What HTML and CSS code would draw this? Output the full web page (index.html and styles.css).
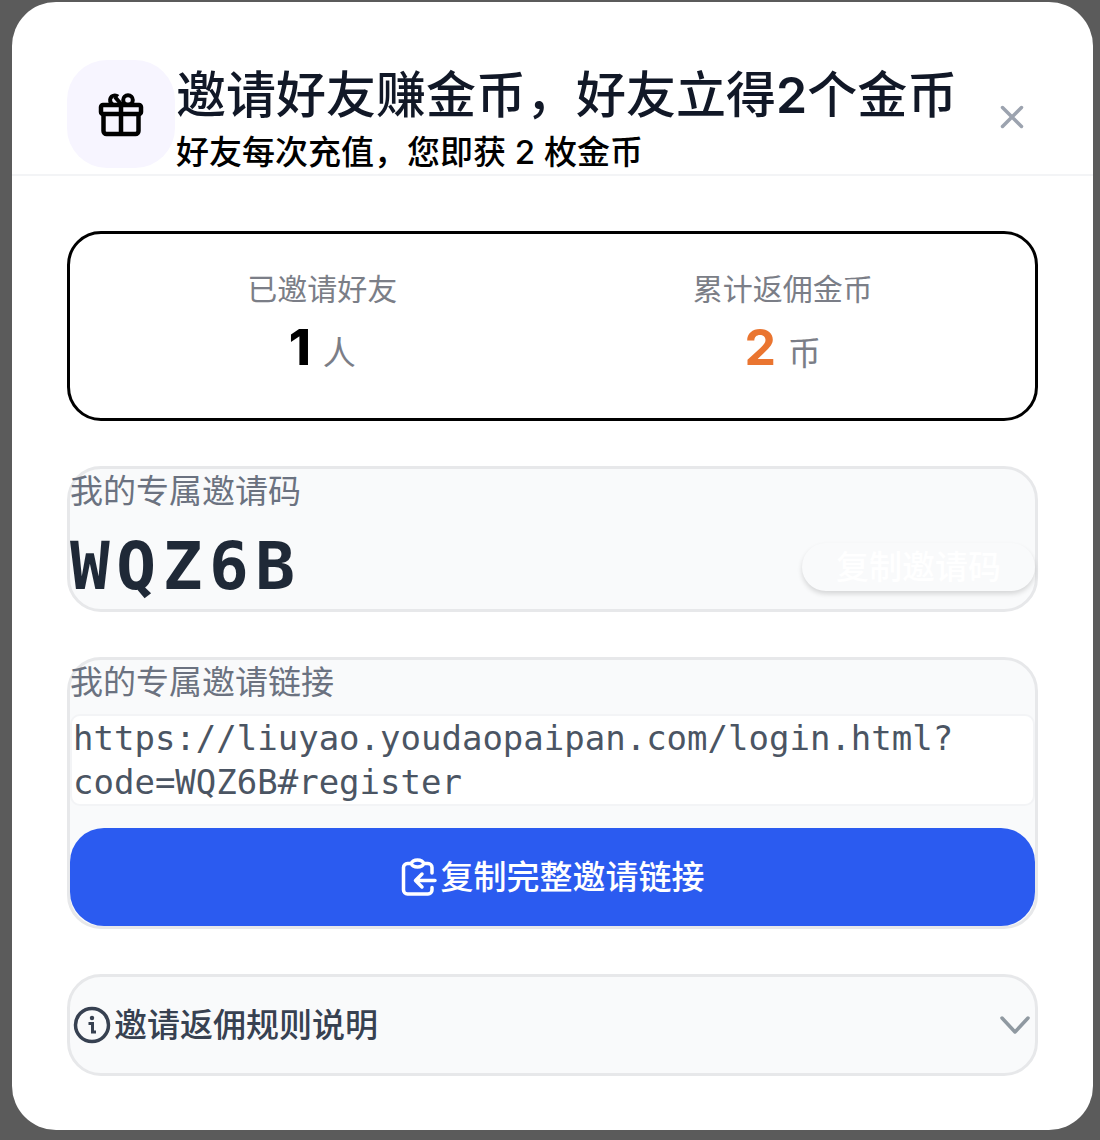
FILE: index.html
```html
<!DOCTYPE html>
<html lang="zh-CN">
<head>
    <meta charset="UTF-8">
    <meta name="viewport" content="width=device-width, initial-scale=1.0">
    <title>邀请好友</title>
    <link rel="stylesheet" href="styles.css">
</head>
<body>
    <main class="modal">
        <header class="modal-header">
            <div class="gift-badge">
                <svg width="46" height="46" viewBox="0 0 46 46" fill="none" stroke="currentColor" stroke-width="4.500" stroke-linejoin="round">
                    <rect x="3" y="14" width="40" height="9" rx="2"/>
                    <path d="M5.500 23V40a3 3 0 0 0 3 3h29a3 3 0 0 0 3-3V23M23 13v30"/>
                    <circle cx="30" cy="9" r="4.800" stroke-width="4"/>
                    <path d="M20 5.500a4.800 4.800 0 1 0-1 8M17 6l6 7" stroke-width="4"/>
                </svg>
            </div>
            <div class="heading">
                <h1 class="title">邀请好友赚金币，好友立得<b>2</b>个金币</h1>
                <p class="subtitle">好友每次充值，您即获 2 枚金币</p>
            </div>
            <button type="button" class="close" aria-label="关闭">
                <svg width="24" height="24" viewBox="0 0 24 24" fill="none" stroke="currentColor" stroke-width="3.500" stroke-linecap="round">
                    <path d="M2.500 2.500l19 19M21.500 2.500l-19 19"/>
                </svg>
            </button>
        </header>

        <div class="modal-body">
            <section class="stats">
                <div class="stat">
                    <p class="stat-label">已邀请好友</p>
                    <p class="stat-value"><strong>1</strong><span class="unit">人</span></p>
                </div>
                <div class="stat">
                    <p class="stat-label">累计返佣金币</p>
                    <p class="stat-value"><strong class="orange">2</strong><span class="unit">币</span></p>
                </div>
            </section>

            <section class="panel">
                <h2 class="panel-label">我的专属邀请码</h2>
                <div class="code-row">
                    <span class="code" id="inviteCode">WQZ6B</span>
                    <button type="button" class="copy-code">复制邀请码</button>
                </div>
            </section>

            <section class="panel">
                <h2 class="panel-label">我的专属邀请链接</h2>
                <p class="link-box">https://liuyao.youdaopaipan.com/login.html?<wbr>code=WQZ6B#register</p>
                <button type="button" class="copy-link">
                    <svg width="36" height="38" viewBox="0 0 36 38" fill="none" stroke="currentColor" stroke-width="3.500" stroke-linecap="round" stroke-linejoin="round">
                        <path d="M9 5.500H6.500a4 4 0 0 0-4 4V32a4 4 0 0 0 4 4H27a4 4 0 0 0 4-4v-2.500M24 5.500h3a4 4 0 0 1 4 4V15"/>
                        <ellipse cx="16.500" cy="5.500" rx="6" ry="3.500"/>
                        <path d="M34 22.500H15M21 16l-6.500 6.500L21 29"/>
                    </svg>
                    复制完整邀请链接
                </button>
            </section>

            <button type="button" class="panel rules" aria-expanded="false">
                <svg width="38" height="38" viewBox="0 0 38 38" fill="none" stroke="currentColor" stroke-width="3.500">
                    <circle cx="19" cy="19" r="16.500"/>
                    <circle cx="19" cy="12" r="2.200" fill="currentColor" stroke="none"/>
                    <path d="M15.500 17.500H19.500V26H23" stroke-width="3"/>
                </svg>
                <span>邀请返佣规则说明</span>
                <svg class="chevron" width="32" height="20" viewBox="0 0 32 20" fill="none" stroke="currentColor" stroke-width="3.500" stroke-linecap="round" stroke-linejoin="round">
                    <path d="M3 3l13 14L29 3"/>
                </svg>
            </button>
        </div>
    </main>
</body>
</html>
```

FILE: styles.css
```css
* {
    margin: 0;
    padding: 0;
    box-sizing: border-box;
}

body {
    background: #5b5b5b;
    padding: 2px 7px 10px 12px;
    font-family: Inter, "Noto Sans CJK SC", sans-serif;
    font-size: 33px;
    line-height: 44px;
    color: #000;
}

button {
    font: inherit;
    border: none;
    background: none;
    cursor: pointer;
}

svg {
    display: block;
    flex-shrink: 0;
}

.modal {
    background: #fff;
    border-radius: 44px;
    overflow: hidden;
}

.modal-header {
    display: flex;
    align-items: flex-start;
    gap: 1px;
    padding: 58px 55px 0;
    border-bottom: 2px solid #f3f4f6;
}

.gift-badge {
    display: flex;
    align-items: center;
    justify-content: center;
    width: 108px;
    height: 108px;
    border-radius: 40px;
    background: #f7f5ff;
}

.heading {
    flex: 1;
}

.title {
    font-size: 50px;
    font-weight: 500;
    line-height: 70px;
    color: #111827;
}

.title b {
    font-weight: 600;
}

.subtitle {
    font-weight: 500;
}

.close {
    display: flex;
    align-items: center;
    justify-content: center;
    align-self: center;
    width: 52px;
    height: 52px;
    color: #9ca3af;
}

.modal-body {
    display: flex;
    flex-direction: column;
    gap: 45px;
    padding: 55px 55px 54px;
}

.stats {
    display: grid;
    grid-template-columns: 1fr 1fr;
    padding: 34px 22px 27px;
    border: 3px solid #000;
    border-radius: 34px;
    text-align: center;
}

.stat-label {
    font-size: 30px;
    font-weight: 400;
    line-height: 42px;
    color: #7b7e87;
}

.stat-value {
    display: flex;
    justify-content: center;
    align-items: baseline;
    gap: 12px;
    line-height: 75px;
}

.stat-value strong {
    font-size: 50px;
    font-weight: 800;
}

.stat-value .orange {
    font-weight: 700;
    color: #ea7530;
}

.unit {
    font-weight: 400;
    color: #7b7e87;
}

.panel {
    border: 3px solid #e7e8ea;
    border-radius: 34px;
    background: #f9fafb;
}

.panel-label {
    font-size: 33px;
    font-weight: 400;
    color: #6b7280;
}

.code-row {
    display: flex;
    align-items: center;
    justify-content: space-between;
    padding-top: 12px;
}

.code {
    font-family: "DejaVu Sans Mono", monospace;
    font-size: 66px;
    font-weight: 700;
    line-height: 84px;
    letter-spacing: 0.1em;
    color: #1f2937;
}

.copy-code {
    padding: 2px 34px;
    border-radius: 24px;
    color: #fff;
    font-weight: 500;
    background: #f9fafb;
    box-shadow: 0 3px 5px rgba(0, 0, 0, 0.14);
}

.link-box {
    margin: 10px 0 22px;
    padding: 0 1px;
    border: 2px solid #f3f4f6;
    border-radius: 10px;
    background: #fff;
    font-family: "DejaVu Sans Mono", monospace;
    font-size: 34px;
    color: #4b5563;
    overflow-wrap: anywhere;
}

.copy-link {
    display: flex;
    align-items: center;
    justify-content: center;
    gap: 4px;
    width: 100%;
    padding: 27px;
    border-radius: 34px;
    background: #2b5bf0;
    color: #fff;
    font-weight: 500;
}

.rules {
    display: flex;
    align-items: center;
    gap: 3px;
    width: 100%;
    padding: 26px 4px 26px 3px;
    color: #374151;
    font-weight: 500;
    text-align: left;
}

.chevron {
    margin-left: auto;
    color: #9099a1;
}
```
